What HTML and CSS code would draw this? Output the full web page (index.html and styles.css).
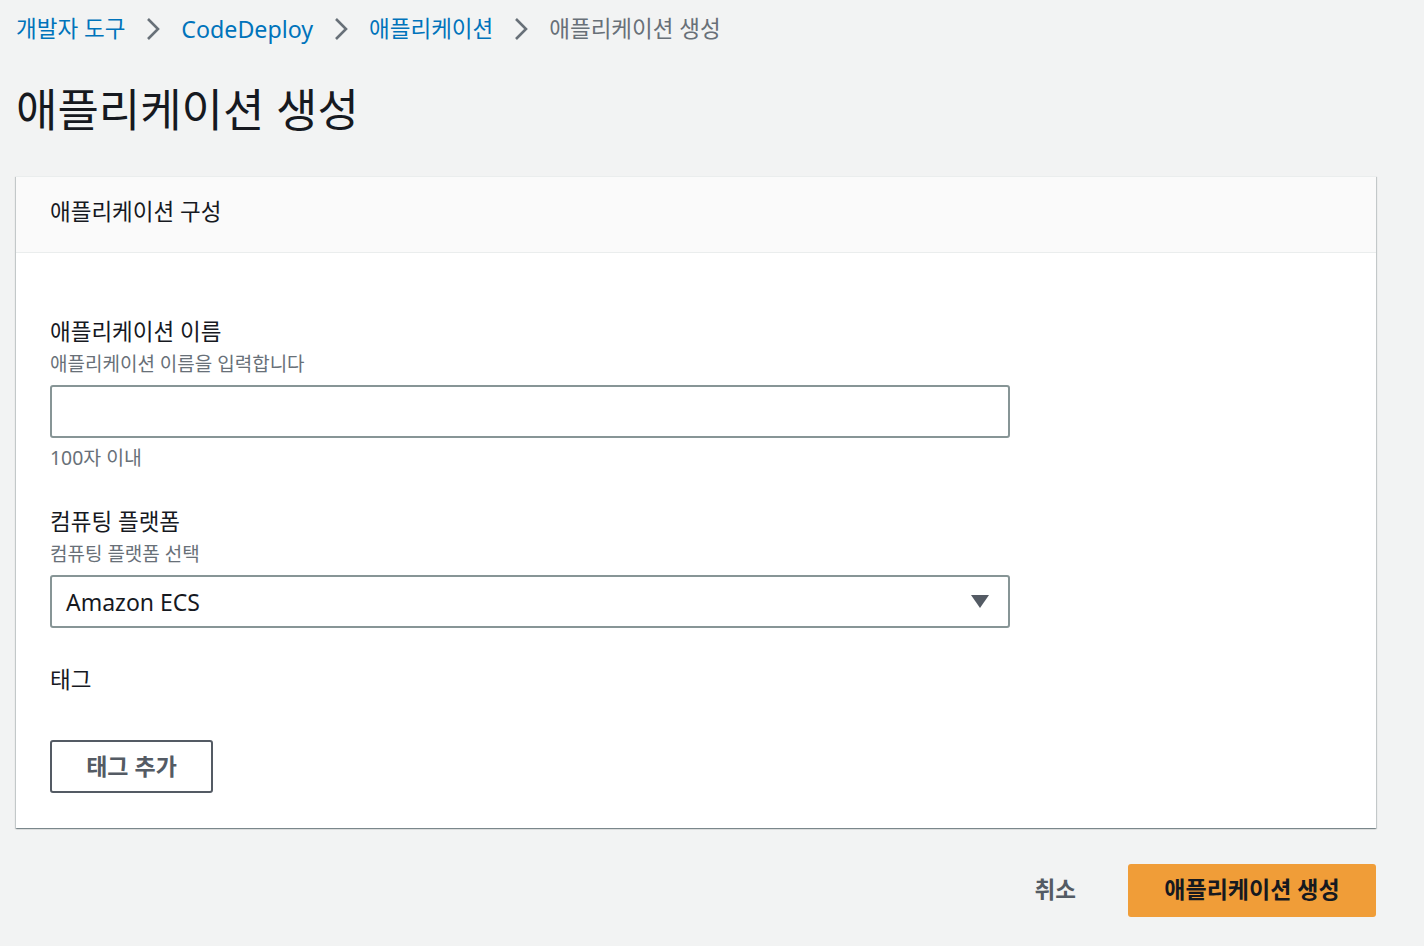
FILE: index.html
```html
<!DOCTYPE html>
<html lang="ko">
<head>
<meta charset="utf-8">
<title>애플리케이션 생성</title>
<link rel="stylesheet" href="styles.css">
</head>
<body>
<div class="page">
  <nav class="crumbs">
    <a class="crumb link">개발자 도구</a>
    <svg class="chev" viewBox="0 0 14 24" width="14" height="24"><polyline points="2,2 12,12 2,22" /></svg>
    <a class="crumb link latin">CodeDeploy</a>
    <svg class="chev" viewBox="0 0 14 24" width="14" height="24"><polyline points="2,2 12,12 2,22" /></svg>
    <a class="crumb link">애플리케이션</a>
    <svg class="chev" viewBox="0 0 14 24" width="14" height="24"><polyline points="2,2 12,12 2,22" /></svg>
    <span class="crumb current">애플리케이션 생성</span>
  </nav>

  <h1 class="title">애플리케이션 생성</h1>

  <section class="panel">
    <div class="panel-head">애플리케이션 구성</div>
    <div class="panel-body">
      <div class="field">
        <div class="label">애플리케이션 이름</div>
        <div class="desc">애플리케이션 이름을 입력합니다</div>
        <div class="input"></div>
        <div class="constraint">100자 이내</div>
      </div>
      <div class="field field-2">
        <div class="label">컴퓨팅 플랫폼</div>
        <div class="desc">컴퓨팅 플랫폼 선택</div>
        <div class="input select">
          <span class="select-value">Amazon ECS</span>
          <svg class="caret" viewBox="0 0 18 14" width="18" height="14"><polygon points="0,0 18,0 9,13" /></svg>
        </div>
      </div>
      <div class="field field-3">
        <div class="label">태그</div>
        <button class="btn-normal" type="button">태그 추가</button>
      </div>
    </div>
  </section>

  <div class="actions">
    <button class="btn-link" type="button">취소</button>
    <button class="btn-primary" type="button">애플리케이션 생성</button>
  </div>
</div>
</body>
</html>
```

FILE: styles.css
```css
html, body {
  margin: 0;
  padding: 0;
  background: #f2f3f3;
}
body {
  font-family: "Noto Sans", "Noto Sans CJK KR", sans-serif;
  color: #16191f;
}
.page {
  padding: 0 48px 0 16px;
}
.crumbs {
  display: flex;
  align-items: center;
  height: 57px;
  gap: 21px;
  font-size: 22.5px;
  font-weight: 400;
}
.crumb {
  text-decoration: none;
  line-height: 30px;
}
.crumb.latin {
  font-size: 23.2px;
}
.crumb.link {
  color: #0073bb;
}
.crumb.current {
  color: #687078;
}
.chev {
  fill: none;
  stroke: #687078;
  stroke-width: 2.6;
}
.title {
  margin: 23px 0 0 0;
  font-size: 45px;
  font-weight: 400;
  line-height: 60px;
  height: 60px;
}
.panel {
  margin-top: 36px;
  background: #fff;
  border-top: 1px solid #eaeded;
  box-shadow: 0 1px 1px 0 rgba(0, 28, 36, 0.3), 1px 1px 1px 0 rgba(0, 28, 36, 0.15), -1px 1px 1px 0 rgba(0, 28, 36, 0.15);
}
.panel-head {
  background: #fafafa;
  border-bottom: 1px solid #eaeded;
  height: 75px;
  line-height: 70px;
  padding: 0 34px;
  font-size: 22.5px;
}
.panel-body {
  padding: 63px 34px 35px;
}
.label {
  font-size: 22.5px;
  line-height: 32px;
}
.desc, .constraint {
  font-size: 19px;
  line-height: 32px;
  color: #687078;
}
.constraint {
  font-size: 19.4px;
  margin-top: 4px;
}
.input {
  box-sizing: border-box;
  width: 960px;
  height: 53px;
  margin-top: 5px;
  border: 2px solid #879596;
  border-radius: 3px;
  background: #fff;
}
.field-2 {
  margin-top: 32px;
}
.select {
  display: flex;
  align-items: center;
  justify-content: space-between;
  padding: 0 19px 0 14px;
}
.select-value {
  font-size: 23px;
}
.caret {
  fill: #545b64;
}
.field-3 {
  margin-top: 36px;
}
.btn-normal {
  margin-top: 44px;
  display: block;
  box-sizing: border-box;
  width: 163px;
  height: 53px;
  border: 2px solid #545b64;
  border-radius: 3px;
  background: #fff;
  color: #545b64;
  font-family: inherit;
  font-size: 23px;
  font-weight: 700;
  padding: 0 0 4px;
}
.actions {
  display: flex;
  justify-content: flex-end;
  align-items: center;
  margin-top: 36px;
  gap: 52px;
}
.btn-link {
  background: none;
  border: none;
  padding: 0 0 5px;
  color: #545b64;
  font-family: inherit;
  font-size: 22.5px;
  font-weight: 700;
}
.btn-primary {
  box-sizing: border-box;
  width: 248px;
  height: 53px;
  border: none;
  border-radius: 3px;
  background: #f09d38;
  color: #16191f;
  font-family: inherit;
  font-size: 23px;
  font-weight: 700;
  padding: 0 0 5px;
}
```
